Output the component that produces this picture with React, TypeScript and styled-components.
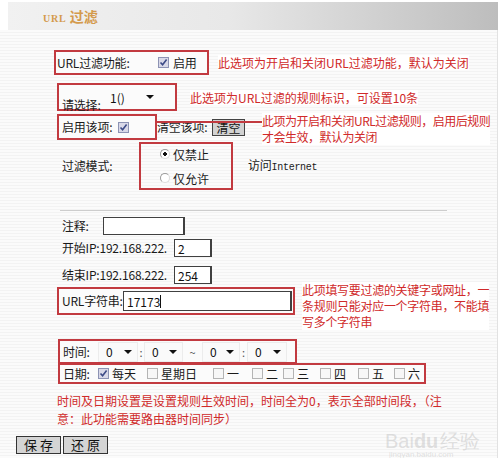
import React from 'react';
import styled, { createGlobalStyle } from 'styled-components';

const GlobalStyle = createGlobalStyle`
  body {
    margin: 0;
    background: #fff;
    font-family: "Noto Sans CJK SC", "Noto Sans", sans-serif;
  }
`;

const DAYS: [string, boolean, number][] = [
  ['每天', true, 49],
  ['星期日', false, 66],
  ['一', false, 39],
  ['二', false, 31],
  ['三', false, 37],
  ['四', false, 38],
  ['五', false, 36],
  ['六', false, 30],
];

export default function App() {
  return (
    <Page>
      <GlobalStyle />
      <Header>
        <Title>
          <small>URL</small> 过滤
        </Title>
      </Header>
      <Content>
        <Form>
          <Row $mt={0} $h={25}>
            <RedBox $w={155} $h={25} $pl={1}>
              <Label $w={101}>URL过滤功能:</Label>
              <Check $on />
              <Label $ml={4}>启用</Label>
            </RedBox>
            <Note $ml={9}>此选项为开启和关闭URL过滤功能，默认为关闭</Note>
          </Row>

          <Row $mt={8} $h={28}>
            <RedBox $w={120} $h={28} $ml={3}>
              <LowLabel $w={46}>请选择:</LowLabel>
              <Select $w={52}>1()</Select>
            </RedBox>
            <Note $ml={13}>此选项为URL过滤的规则标识，可设置10条</Note>
          </Row>

          <Row $mt={3} $h={26}>
            <RedBox $w={100} $h={26} $ml={3}>
              <Label $w={56}>启用该项:</Label>
              <Check $on />
            </RedBox>
            <Label $w={55}>清空该项:</Label>
            <SmallButton>清空</SmallButton>
            <LinkedNote $ml={17}>
              此项为开启和关闭URL过滤规则，启用后规则
              <br />
              才会生效，默认为关闭
            </LinkedNote>
          </Row>

          <Row $mt={2} $h={48}>
            <Label $w={77} $ml={8}>过滤模式:</Label>
            <RadioBox>
              <RadioItem>
                <Radio $on />
                仅禁止
              </RadioItem>
              <RadioItem>
                <Radio />
                仅允许
              </RadioItem>
            </RadioBox>
            <Label $ml={15}>
              访问<Mono>Internet</Mono>
            </Label>
          </Row>

          <Separator />

          <Row $mt={6} $h={17}>
            <Label $w={41} $ml={8}>注释:</Label>
            <TextInput $w={82} />
          </Row>
          <Row $mt={5} $h={18}>
            <Label $w={112} $ml={8}>开始IP:192.168.222.</Label>
            <TextInput $w={38}>2</TextInput>
          </Row>
          <Row $mt={9} $h={18}>
            <Label $w={112} $ml={8}>结束IP:192.168.222.</Label>
            <TextInput $w={38}>254</TextInput>
          </Row>

          <Row $mt={3} $h={28}>
            <RedBox $w={238} $h={28} $ml={3}>
              <Label $w={61}>URL字符串:</Label>
              <TextInput $w={169} $h={20}>
                17173<Caret />
              </TextInput>
            </RedBox>
            <TallNote $ml={7}>
              此项填写要过滤的关键字或网址，一
              <br />
              条规则只能对应一个字符串，不能填
              <br />
              写多个字符串
            </TallNote>
          </Row>

          <Row $mt={24} $h={25}>
            <RedBox $w={239} $h={25} $ml={4}>
              <Label $w={35}>时间:</Label>
              <Select $w={40} $soft>0</Select>
              <Sep $w={6}>:</Sep>
              <Select $w={39} $soft>0</Select>
              <Sep $w={19}>~</Sep>
              <Select $w={38} $soft>0</Select>
              <Sep $w={7}>:</Sep>
              <Select $w={40} $soft>0</Select>
            </RedBox>
          </Row>
          <Row $mt={-1} $h={21}>
            <RedBox $w={368} $h={21} $ml={4}>
              <Label $w={35}>日期:</Label>
              {DAYS.map(([name, on, w]) => (
                <DayItem key={name} $w={w}>
                  <Check $on={on} />
                  {name}
                </DayItem>
              ))}
            </RedBox>
          </Row>

          <BottomNote>
            时间及日期设置是设置规则生效时间，时间全为0，表示全部时间段，（注
            <br />
            意：此功能需要路由器时间同步）
          </BottomNote>
        </Form>

        <Footer>
          <FormButton>保 存</FormButton>
          <FormButton>还 原</FormButton>
        </Footer>

        <Watermark>
          <span>Bai</span>
          <Paw>du</Paw>
          <span>经验</span>
          <WatermarkUrl>jingyan.baidu.com</WatermarkUrl>
        </Watermark>
      </Content>
    </Page>
  );
}

function Check({ $on }: { $on?: boolean }) {
  return (
    <CheckBox $on={$on}>
      {$on && (
        <svg width="9" height="9" viewBox="0 0 9 9">
          <path d="M1.5 4.5 L3.6 6.8 L7.6 1.6" fill="none" stroke="#3c4a86" strokeWidth="1.6" />
        </svg>
      )}
    </CheckBox>
  );
}

const Page = styled.div`
  width: 503px;
  height: 458px;
  position: relative;
  overflow: hidden;
  display: flex;
  flex-direction: column;
  background: #fff;
`;

const Header = styled.div`
  height: 28px;
  margin: 2px 5px 0 8px;
  padding-left: 35px;
  display: flex;
  align-items: center;
  background: linear-gradient(to right, #f1f1f1 0%, #e8e8e8 45%, #c9c9c9 85%, #bdbdbd 100%);
`;

const Title = styled.div`
  color: #d49a4c;
  font-weight: bold;
  font-size: 14px;

  small {
    font-family: "Liberation Serif", serif;
    font-size: 10px;
    letter-spacing: 0.8px;
  }
`;

const Content = styled.div`
  flex: 1;
  position: relative;
  margin-right: 5px;
  border-right: 1px solid #e2e2e2;
  background: repeating-linear-gradient(to bottom, #fbfbfb 0, #fbfbfb 2px, #f3f3f3 2px, #f3f3f3 3px);
  display: flex;
  flex-direction: column;
`;

const Form = styled.div`
  padding: 20px 0 0 54px;
  display: flex;
  flex-direction: column;
`;

const Row = styled.div<{ $mt: number; $h: number }>`
  display: flex;
  align-items: center;
  margin-top: ${p => p.$mt}px;
  height: ${p => p.$h}px;
  flex-shrink: 0;
`;

const RedBox = styled.div<{ $w: number; $h: number; $ml?: number; $pl?: number }>`
  display: flex;
  align-items: center;
  box-sizing: border-box;
  flex-shrink: 0;
  width: ${p => p.$w}px;
  height: ${p => p.$h}px;
  margin-left: ${p => p.$ml ?? 0}px;
  padding-left: ${p => p.$pl ?? 3}px;
  border: 2px solid #c23a40;
  background: #fbfbfb;
`;

const Label = styled.span<{ $w?: number; $ml?: number }>`
  font-size: 12px;
  line-height: 16px;
  color: #1a1a1a;
  white-space: nowrap;
  flex-shrink: 0;
  letter-spacing: -0.2px;
  width: ${p => (p.$w ? `${p.$w}px` : 'auto')};
  margin-left: ${p => p.$ml ?? 0}px;
`;

const LowLabel = styled(Label)`
  align-self: flex-end;
  margin-bottom: -4px;
`;

const Mono = styled.span`
  font-family: "Liberation Mono", monospace;
  font-size: 10px;
  letter-spacing: -0.3px;
`;

const Note = styled.div<{ $ml: number }>`
  margin-left: ${p => p.$ml}px;
  color: #d02a2a;
  font-size: 12px;
  line-height: 15px;
  white-space: nowrap;
  background: #fff;
`;

const LinkedNote = styled(Note)`
  position: relative;
  align-self: flex-start;
  margin-top: -1px;
  line-height: 16px;
  letter-spacing: -0.5px;

  &::before {
    content: '';
    position: absolute;
    left: -107px;
    top: 8px;
    width: 107px;
    height: 2px;
    background: #c23a40;
  }
`;

const TallNote = styled(Note)`
  align-self: flex-start;
  margin-top: -5px;
  line-height: 16px;
  letter-spacing: -0.3px;
`;

const CheckBox = styled.span<{ $on?: boolean }>`
  display: inline-flex;
  align-items: center;
  justify-content: center;
  box-sizing: border-box;
  width: 11px;
  height: 11px;
  flex-shrink: 0;
  border: 1px solid ${p => (p.$on ? '#8d93b4' : '#b4b4b4')};
  background: ${p => (p.$on ? '#d9d9e8' : '#f7f7f7')};
`;

const Select = styled.div<{ $w: number; $soft?: boolean }>`
  display: flex;
  align-items: center;
  justify-content: space-between;
  box-sizing: border-box;
  width: ${p => p.$w}px;
  height: 20px;
  padding: 0 5px 0 ${p => (p.$soft ? 7 : 1)}px;
  font-size: 12px;
  color: #111;
  background: ${p => (p.$soft ? '#fafafa' : 'transparent')};
  border: 1px solid ${p => (p.$soft ? '#ececec' : 'transparent')};

  &::after {
    content: '';
    border-left: 4px solid transparent;
    border-right: 4px solid transparent;
    border-top: 4px solid #111;
  }
`;

const Sep = styled.span<{ $w: number }>`
  width: ${p => p.$w}px;
  text-align: center;
  font-size: 11px;
  color: #555;
`;

const SmallButton = styled.div`
  box-sizing: border-box;
  width: 33px;
  height: 17px;
  border: 1px solid #444;
  background: #d2d2d2;
  font-size: 12px;
  line-height: 15px;
  text-align: center;
  color: #111;
`;

const RadioBox = styled.div`
  display: flex;
  flex-direction: column;
  justify-content: center;
  gap: 8px;
  box-sizing: border-box;
  width: 94px;
  height: 48px;
  padding-left: 19px;
  border: 2px solid #c23a40;
`;

const RadioItem = styled.div`
  display: flex;
  align-items: center;
  gap: 3px;
  height: 16px;
  font-size: 12px;
  color: #1a1a1a;
`;

const Radio = styled.span<{ $on?: boolean }>`
  box-sizing: border-box;
  width: 10px;
  height: 10px;
  border-radius: 50%;
  border: 1px solid #9a9a9a;
  border-right-color: #dcdcdc;
  border-bottom-color: #dcdcdc;
  background: ${p => (p.$on ? 'radial-gradient(circle, #111 0 1.6px, #fff 2px)' : '#fff')};
`;

const Separator = styled.div`
  margin: 20px 0 0 6px;
  width: 387px;
  height: 1px;
  background: #cdcdcd;
`;

const TextInput = styled.div<{ $w: number; $h?: number }>`
  display: flex;
  align-items: center;
  box-sizing: border-box;
  width: ${p => p.$w}px;
  height: ${p => p.$h ?? 18}px;
  padding-left: 3px;
  border: 1px solid #404040;
  border-right-width: 2px;
  background: #fff;
  font-size: 12px;
  color: #111;
`;

const Caret = styled.span`
  width: 1px;
  height: 13px;
  background: #111;
`;

const DayItem = styled.span<{ $w: number }>`
  display: flex;
  align-items: center;
  gap: 3px;
  width: ${p => p.$w}px;
  flex-shrink: 0;
  font-size: 12px;
  color: #1a1a1a;
  white-space: nowrap;
`;

const BottomNote = styled.div`
  margin: 8px 0 0 3px;
  color: #d02a2a;
  font-size: 12px;
  line-height: 18px;
  white-space: nowrap;
`;

const Footer = styled.div`
  display: flex;
  gap: 2px;
  margin-top: 8px;
  padding-left: 16px;
`;

const FormButton = styled.div`
  box-sizing: border-box;
  width: 45px;
  height: 18px;
  border: 1px solid #333;
  background: #d4d4d4;
  font-size: 13px;
  line-height: 16px;
  text-align: center;
  color: #111;
`;

const Watermark = styled.div`
  position: absolute;
  left: 385px;
  top: 398px;
  display: flex;
  align-items: baseline;
  font-family: "Liberation Sans", sans-serif;
  font-size: 20px;
  color: rgba(180, 180, 180, 0.4);
  pointer-events: none;
`;

const Paw = styled.span`
  font-weight: bold;
  margin-right: 2px;
`;

const WatermarkUrl = styled.span`
  position: absolute;
  left: 4px;
  top: 22px;
  font-size: 8px;
  line-height: 10px;
  white-space: nowrap;
`;
